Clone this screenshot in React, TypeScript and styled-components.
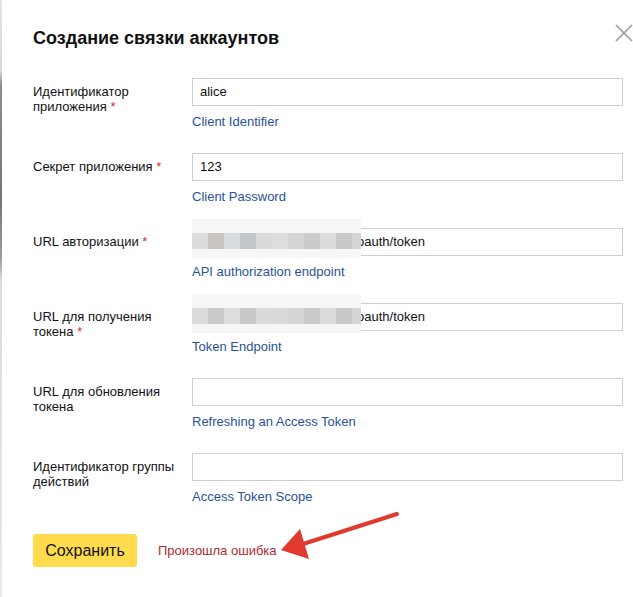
import React from "react";
import styled, { createGlobalStyle } from "styled-components";

const Global = createGlobalStyle`
  html, body { margin: 0; padding: 0; background: #fff; }
  body { font-family: "Liberation Sans", Arial, sans-serif; color: #000; }
`;

const Page = styled.div`
  display: flex;
  width: 633px;
  height: 597px;
  overflow: hidden;
  position: relative;
  background: #fff;
`;

const Backdrop = styled.div`
  width: 2px;
  flex: none;
  background: linear-gradient(
    to bottom,
    #e4e4e4 0px,
    #d8d8d8 70px,
    #8a8f96 85px,
    #70767e 200px,
    #9aa0a6 260px,
    #dcdcdc 280px,
    #e8e8e8 597px
  );
`;

const Dialog = styled.div`
  flex: 1;
  padding: 27px 10px 0 31px;
  position: relative;
`;

const Title = styled.h1`
  margin: 0;
  font-size: 18px;
  line-height: 22px;
  font-weight: bold;
  color: #111;
`;

const Close = styled.button`
  position: absolute;
  top: 24px;
  right: 0px;
  width: 18px;
  height: 18px;
  padding: 0;
  border: 0;
  background: none;
  display: flex;
`;

const Form = styled.div`
  display: flex;
  flex-direction: column;
  gap: 23px;
  margin-top: 29px;
`;

const Row = styled.div`
  display: grid;
  grid-template-columns: 150px 1fr;
  column-gap: 9px;
`;

const Label = styled.div`
  font-size: 13px;
  line-height: 15px;
  padding-top: 6px;
  color: #111;
`;

const Star = styled.span`
  color: #d0302b;
`;

const Field = styled.div`
  display: flex;
  flex-direction: column;
`;

const InputWrap = styled.div`
  position: relative;
`;

const Input = styled.div<{ $indent?: number }>`
  box-sizing: border-box;
  height: 28px;
  border: 1px solid #cfcfcf;
  font-size: 13px;
  line-height: 26px;
  padding-left: ${(p) => (p.$indent ? p.$indent : 7)}px;
  color: #111;
  white-space: nowrap;
  overflow: hidden;
`;

const Blur = styled.div`
  position: absolute;
  left: 0;
  top: -9px;
  width: 169px;
  height: 39px;
  background: #f6f6f6;
  display: flex;
  align-items: center;
`;

const Pixels = styled.div`
  display: flex;
  height: 16px;
  margin-top: 5px;
`;

const Px = styled.div<{ $c: string; $w?: number }>`
  width: ${(p) => p.$w ?? 16}px;
  height: 16px;
  background: ${(p) => p.$c};
`;

const Hint = styled.a`
  margin-top: 8px;
  font-size: 13px;
  line-height: 16px;
  color: #2a5298;
  text-decoration: none;
`;

const Footer = styled.div`
  display: flex;
  align-items: center;
  gap: 21px;
  margin-top: 29px;
  position: relative;
`;

const SaveButton = styled.button`
  width: 104px;
  height: 33px;
  border: 0;
  border-radius: 3px;
  background: #ffdb4d;
  font-family: "Liberation Sans", Arial, sans-serif;
  font-size: 16px;
  color: #111;
  padding: 0;
`;

const ErrorText = styled.span`
  font-size: 13px;
  color: #ad2a33;
`;

const Arrow = styled.svg`
  position: absolute;
  left: 230px;
  top: -30px;
  overflow: visible;
`;

const pixels1 = ["#dcdcdc", "#c8c5c5", "#dadbdd", "#c5c6cb", "#d9d9d9", "#dddddd", "#d5d5d5", "#cbcbcb", "#dcdcdc", "#c9c9c9", "#d5d5d5"];
const pixels2 = ["#dcdcdc", "#cacaca", "#dddddd", "#c9c9c9", "#dadada", "#d9d9d9", "#d6d6d6", "#cacaca", "#dcdcdc", "#c8c8c8", "#d6d6d6"];

function Blurred({ colors }: { colors: string[] }) {
  return (
    <Blur>
      <Pixels>
        {colors.map((c, i) => (
          <Px key={i} $c={c} $w={i === colors.length - 1 ? 9 : 16} />
        ))}
      </Pixels>
    </Blur>
  );
}

type F = {
  label: React.ReactNode;
  required?: boolean;
  value?: string;
  hint: string;
  blur?: string[];
};

const fields: F[] = [
  { label: "Идентификатор приложения", required: true, value: "alice", hint: "Client Identifier" },
  { label: "Секрет приложения", required: true, value: "123", hint: "Client Password" },
  { label: "URL авторизации", required: true, value: "oauth/token", hint: "API authorization endpoint", blur: pixels1 },
  { label: "URL для получения токена", required: true, value: "oauth/token", hint: "Token Endpoint", blur: pixels2 },
  { label: "URL для обновления токена", value: "", hint: "Refreshing an Access Token" },
  { label: "Идентификатор группы действий", value: "", hint: "Access Token Scope" },
];

export default function App() {
  return (
    <>
      <Global />
      <Page>
        <Backdrop />
        <Dialog>
          <Title>Создание связки аккаунтов</Title>
          <Close aria-label="Закрыть">
            <svg width="18" height="18" viewBox="0 0 18 18">
              <path d="M1 1 L17 17 M17 1 L1 17" stroke="#9a9a9a" strokeWidth="1.6" fill="none" />
            </svg>
          </Close>
          <Form>
            {fields.map((f, i) => (
              <Row key={i}>
                <Label>
                  {f.label}
                  {f.required && <Star> *</Star>}
                </Label>
                <Field>
                  <InputWrap>
                    <Input $indent={f.blur ? 164 : 7}>{f.value}</Input>
                    {f.blur && <Blurred colors={f.blur} />}
                  </InputWrap>
                  <Hint href="#">{f.hint}</Hint>
                </Field>
              </Row>
            ))}
          </Form>
          <Footer>
            <SaveButton>Сохранить</SaveButton>
            <ErrorText>Произошла ошибка</ErrorText>
            <Arrow width="140" height="60" viewBox="0 0 140 60">
              <line x1="134" y1="10" x2="40" y2="40" stroke="#e0392d" strokeWidth="4" strokeLinecap="round" />
              <polygon points="18,46 37,25 46,55" fill="#e0392d" />
            </Arrow>
          </Footer>
        </Dialog>
      </Page>
    </>
  );
}
